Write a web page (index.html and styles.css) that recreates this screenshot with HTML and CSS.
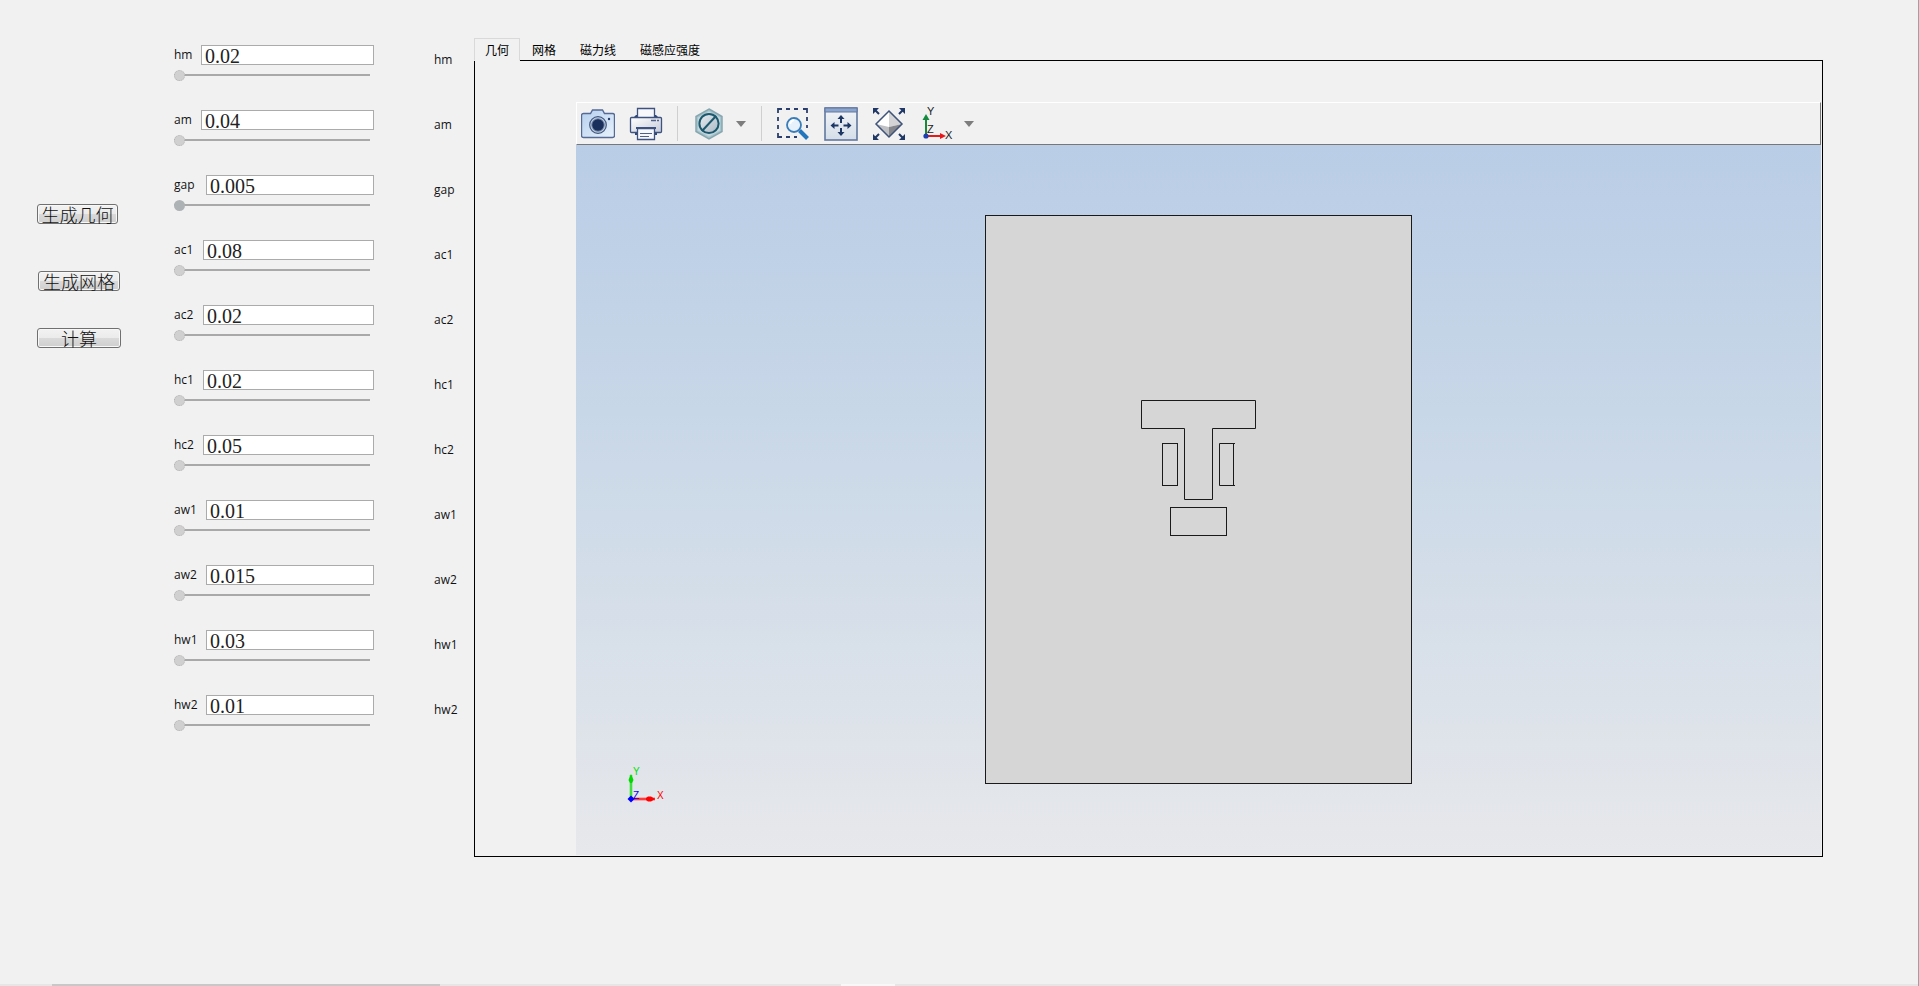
FILE: index.html
```
<!DOCTYPE html>
<html lang="zh-CN">
<head>
<meta charset="utf-8">
<title>几何</title>
<link rel="stylesheet" href="styles.css">
</head>
<body>
<main class="app">
  <div class="actions">
    <button class="btn btn-geometry" type="button">生成几何</button>
    <button class="btn btn-mesh" type="button">生成网格</button>
    <button class="btn btn-solve" type="button">计算</button>
  </div>

  <div class="params">
    <div class="param"><div class="field"><label for="hm">hm</label><input class="value" id="hm" type="text" value="0.02"></div><input class="slider" type="range" value="0" aria-label="hm"></div>
    <div class="param"><div class="field"><label for="am">am</label><input class="value" id="am" type="text" value="0.04"></div><input class="slider" type="range" value="0" aria-label="am"></div>
    <div class="param"><div class="field field-wide"><label for="gap">gap</label><input class="value" id="gap" type="text" value="0.005"></div><input class="slider slider-active" type="range" value="0" aria-label="gap"></div>
    <div class="param"><div class="field field-mid"><label for="ac1">ac1</label><input class="value" id="ac1" type="text" value="0.08"></div><input class="slider" type="range" value="0" aria-label="ac1"></div>
    <div class="param"><div class="field field-mid"><label for="ac2">ac2</label><input class="value" id="ac2" type="text" value="0.02"></div><input class="slider" type="range" value="0" aria-label="ac2"></div>
    <div class="param"><div class="field field-mid"><label for="hc1">hc1</label><input class="value" id="hc1" type="text" value="0.02"></div><input class="slider" type="range" value="0" aria-label="hc1"></div>
    <div class="param"><div class="field field-mid"><label for="hc2">hc2</label><input class="value" id="hc2" type="text" value="0.05"></div><input class="slider" type="range" value="0" aria-label="hc2"></div>
    <div class="param"><div class="field field-wide"><label for="aw1">aw1</label><input class="value" id="aw1" type="text" value="0.01"></div><input class="slider" type="range" value="0" aria-label="aw1"></div>
    <div class="param"><div class="field field-wide"><label for="aw2">aw2</label><input class="value" id="aw2" type="text" value="0.015"></div><input class="slider" type="range" value="0" aria-label="aw2"></div>
    <div class="param"><div class="field field-wide"><label for="hw1">hw1</label><input class="value" id="hw1" type="text" value="0.03"></div><input class="slider" type="range" value="0" aria-label="hw1"></div>
    <div class="param"><div class="field field-wide"><label for="hw2">hw2</label><input class="value" id="hw2" type="text" value="0.01"></div><input class="slider" type="range" value="0" aria-label="hw2"></div>
  </div>

  <div class="names">
    <span>hm</span><span>am</span><span>gap</span><span>ac1</span><span>ac2</span><span>hc1</span><span>hc2</span><span>aw1</span><span>aw2</span><span>hw1</span><span>hw2</span>
  </div>

  <section class="viewer">
    <div class="tabs" role="tablist">
      <button class="tab tab-active" type="button" role="tab" aria-selected="true">几何</button>
      <button class="tab" type="button" role="tab">网格</button>
      <button class="tab" type="button" role="tab">磁力线</button>
      <button class="tab" type="button" role="tab">磁感应强度</button>
    </div>
    <div class="panel">
      <div class="toolbar">
        <button class="tool" type="button" aria-label="Snapshot">
          <svg width="34" height="34" viewBox="0 0 34 34">
            <defs>
              <linearGradient id="cam" x1="0" y1="0" x2="1" y2="1"><stop offset="0" stop-color="#b6d0ee"/><stop offset="1" stop-color="#e8f2fc"/></linearGradient>
            </defs>
            <path d="M2.500 6.500h7l2-3.500h10l2 3.500h8a2 2 0 0 1 2 2v20a2 2 0 0 1-2 2h-29a2 2 0 0 1-2-2v-20a2 2 0 0 1 2-2z" fill="url(#cam)" stroke="#566a96" stroke-width="1.400"/>
            <circle cx="17" cy="18" r="8.300" fill="#c3d3e6" stroke="#42567f" stroke-width="1.200"/>
            <circle cx="17" cy="18" r="6.300" fill="#1b2f5c" stroke="#7f92b0"/>
            <circle cx="28" cy="12" r="1.200" fill="#263c6d"/>
          </svg>
        </button>
        <button class="tool" type="button" aria-label="Print">
          <svg width="34" height="34" viewBox="0 0 34 34">
            <defs>
              <linearGradient id="prn" x1="0" y1="0" x2="1" y2="1"><stop offset="0" stop-color="#fff"/><stop offset="1" stop-color="#c4cad8"/></linearGradient>
            </defs>
            <path d="M5 10l2-2h20l2 2zM6 28v-6h22v6z" fill="#30466f"/>
            <path d="M8.500 1.500h17v10h-17z" fill="#f7f8fc" stroke="#3e5280" stroke-width="1.300"/>
            <rect x="1.500" y="10.500" width="31" height="15" rx="1" fill="url(#prn)" stroke="#3e5280" stroke-width="1.300"/>
            <path d="M22 13.500h5M28 13.500h2" stroke="#4e608b" stroke-width="1.500"/>
            <path d="M7 21h20" stroke="#3e5280" stroke-width="2"/>
            <path d="M8.500 21.500h17v11h-17z" fill="#f7f8fc" stroke="#3e5280" stroke-width="1.300"/>
            <path d="M11 26.500h12M11 29.500h9" stroke="#4e608b" stroke-width="1.200"/>
          </svg>
        </button>
        <span class="divider"></span>
        <button class="tool" type="button" aria-label="Clipping">
          <svg width="34" height="34" viewBox="0 0 34 34">
            <defs>
              <linearGradient id="clip" x1="0" y1="0" x2="1" y2="1"><stop offset="0" stop-color="#e8edf2"/><stop offset="1" stop-color="#aab7c3"/></linearGradient>
            </defs>
            <path d="M17 2l13 7.500v15l-13 7.500-13-7.500v-15z" fill="#a8c4cc" stroke="#87a7b0" stroke-width="1.500"/>
            <path d="M17 4.500l11 6v13l-11 6-11-6v-13z" fill="#c3d7dc"/>
            <circle cx="17" cy="16.500" r="9.600" fill="url(#clip)" stroke="#1c586d" stroke-width="2"/>
            <path d="M24 9L10 24" stroke="#1c586d" stroke-width="2"/>
          </svg>
        </button>
        <button class="arrow" type="button" aria-label="Clipping options"><svg width="12" height="8" viewBox="0 0 12 8"><path d="M1 1h10L6 7z" fill="#7d7d7d"/></svg></button>
        <span class="divider"></span>
        <button class="tool" type="button" aria-label="Zoom box">
          <svg width="34" height="34" viewBox="0 0 34 34">
            <path d="M2 6V2h4M10 2h4M18 2h4M27 2h4v4M31 10v4M31 18v3M2 10v4M2 18v4M2 26v4h4M10 30h4M18 30h3" fill="none" stroke="#2b3f6c" stroke-width="1.800"/>
            <circle cx="18" cy="18" r="7" fill="#e6f1fb" stroke="#3a7cb7" stroke-width="1.800"/>
            <path d="M14 17a5 5 0 0 1 4-4" stroke="#fff" stroke-width="2" fill="none"/>
            <path d="M23.500 23.500L31.500 31.500" stroke="#2277bd" stroke-width="4"/>
          </svg>
        </button>
        <button class="tool" type="button" aria-label="Zoom extents">
          <svg width="34" height="34" viewBox="0 0 34 34">
            <defs><linearGradient id="win" x1="0" y1="0" x2="0" y2="1"><stop offset="0" stop-color="#f2f5f8"/><stop offset="1" stop-color="#d4dde8"/></linearGradient></defs>
            <rect x="1" y="1" width="32" height="32" fill="url(#win)" stroke="#62779f" stroke-width="1.600"/>
            <path d="M1 1h32v4H1z" fill="#8ba6cd" stroke="#62779f"/>
            <path d="M17 16v-6M17 21v6M14.500 18.500h-5M19.500 18.500h5" stroke="#1d3765" stroke-width="2"/>
            <path d="M17 8l3.500 4h-7zM17 29l3.500-4h-7zM6.500 18.500l4-3.500v7zM27.500 18.500l-4-3.500v7z" fill="#1d3765"/>
          </svg>
        </button>
        <button class="tool" type="button" aria-label="Zoom selected">
          <svg width="34" height="34" viewBox="0 0 34 34">
            <path d="M17 4l13 13-13 13L4 17z" fill="#fff"/>
            <path d="M17 4l13 13-13 3z" fill="#d4d4d6"/><path d="M4 17l13 3v10z" fill="#bfc0c3"/><path d="M30 17l-13 3v10z" fill="#85878c"/>
            <path d="M17 4l13 13-13 13L4 17z" fill="none" stroke="#3f5378" stroke-width="1.500"/>
            <path d="M3 3l4 4M31 3l-4 4M3 31l4-4M31 31l-4-4" stroke="#1f3866" stroke-width="2"/>
            <path d="M1 1h6l-6 6zM33 1h-6l6 6zM1 33h6l-6-6zM33 33h-6l6-6z" fill="#1f3866"/>
          </svg>
        </button>
        <button class="tool" type="button" aria-label="View orientation">
          <svg class="axes" width="34" height="34" viewBox="0 0 34 34">
            <path d="M6 29V12" stroke="#16893c" stroke-width="2"/><path d="M6 7l3.500 6h-7z" fill="#16893c"/>
            <path d="M6 29h16" stroke="#e81818" stroke-width="2"/><path d="M26 29l-6-3v6z" fill="#e81818"/>
            <circle cx="6" cy="29" r="2.600" fill="#203fae"/>
            <g font-size="11" fill="#222"><text x="7" y="8">Y</text><text x="7" y="26">Z</text><text x="25" y="32">X</text></g>
          </svg>
        </button>
        <button class="arrow" type="button" aria-label="View options"><svg width="12" height="8" viewBox="0 0 12 8"><path d="M1 1h10L6 7z" fill="#7d7d7d"/></svg></button>
      </div>
      <div class="canvas">
        <svg class="drawing" viewBox="0 0 1245 710" preserveAspectRatio="xMidYMid meet" role="img" aria-label="几何">
          <g fill="#d6d6d6" stroke="#1a1a1a" stroke-width="1">
            <rect x="409.500" y="70.500" width="426" height="568"/>
            <path d="M565.500 255.500h114v28h-43v71h-28v-71h-43z"/>
            <rect x="586.500" y="298.500" width="15" height="42"/>
            <path d="M659 298.500h-15.500v42H659M657.500 298.500v42"/>
            <rect x="594.500" y="362.500" width="56" height="28"/>
          </g>
        </svg>
        <svg class="triad" width="40" height="40" viewBox="0 0 40 40" font-size="10">
          <path d="M6 33V9" stroke="#7ee67e" stroke-width="3"/><path d="M6 33V9" stroke="#00d800"/><path d="M6 8l2.500 6-1.500 3h-2l-1.500-3z" fill="#00d800"/>
          <path d="M6 33h24" stroke="#f77" stroke-width="3"/><path d="M6 33h24" stroke="#f00"/><path d="M30 33l-4 2.500h-3l-2-1.500v-2l2-1.500h3z" fill="#f00"/>
          <path d="M6 29.500l3.500 3.500L6 36.500 2.500 33z" fill="#00f"/>
          <text x="8" y="9" fill="#00e000">Y</text><text x="8" y="33" fill="#00f">Z</text><text x="32" y="33" fill="#f00">X</text>
        </svg>
      </div>
    </div>
  </section>
</main>
<div class="scrollbar"><span class="scroll-thumb"></span><span class="scroll-mark"></span></div>
</body>
</html>
```
FILE: styles.css
```
* { box-sizing: border-box; }
body {
  margin: 0;
  min-height: 100vh;
  display: flex;
  flex-direction: column;
  background: #f1f1f1;
  border-right: 1px solid #a0a0a0;
  font: 12px/20px "Open Sans", "Noto Sans CJK SC", sans-serif;
  color: #111;
}
button { margin: 0; padding: 0; font: inherit; color: inherit; background: none; border: 0; }
.app { flex: 1; display: flex; align-items: stretch; padding: 38px 95px 0 37px; }

.actions { width: 137px; padding-top: 166px; display: flex; flex-direction: column; align-items: flex-start; }
.btn {
  height: 20px;
  border: 1px solid #707070;
  border-radius: 3px;
  background: linear-gradient(#f2f2f2 0%, #ebebeb 50%, #dadada 51%, #cfcfcf 100%);
  box-shadow: inset 0 0 0 1px #f8f8f8;
  font: 300 18px/16px "Noto Sans CJK SC", sans-serif;
  white-space: nowrap;
}
.btn-geometry { width: 81px; }
.btn-mesh { width: 82px; margin: 47px 0 37px 1px; }
.btn-solve { width: 84px; }

.params { width: 260px; padding-top: 7px; }
.param { height: 65px; }
.field { display: grid; grid-template-columns: 27px 173px; }
.field-mid { grid-template-columns: 29px 171px; }
.field-wide { grid-template-columns: 32px 168px; }
.value {
  width: 100%;
  height: 20px;
  margin: 0;
  padding: 2px 3px 0;
  border: 1px solid #ababab;
  border-radius: 0;
  background: #fff;
  color: #222;
  font: 20px/18px "Liberation Serif", serif;
}
.slider { appearance: none; display: block; width: 196px; height: 12px; margin: 4px 0 0; background: transparent; }
.slider::-webkit-slider-runnable-track { height: 2px; background: #a9a9a9; }
.slider::-webkit-slider-thumb { appearance: none; width: 11px; height: 11px; margin-top: -4px; border: 1px dotted #b4b4b4; border-radius: 50%; background: #d0d0d0; }
.slider-active::-webkit-slider-thumb { border: 0; background: #adb2b5; }

.names { width: 40px; padding-top: 12px; display: flex; flex-direction: column; }
.names span { height: 65px; }

.viewer { flex: 1; min-width: 0; display: flex; flex-direction: column; margin-bottom: 127px; }
.tabs { display: flex; height: 23px; }
.tab { height: 22px; padding: 0 12px; color: #000; font: 12px/24px "Noto Sans CJK SC", sans-serif; }
.tab-active { position: relative; height: 23px; padding: 0 10px; border: 1px solid #d9d9d9; border-bottom-color: #f1f1f1; background: #f1f1f1; line-height: 22px; }
.panel { flex: 1; display: flex; flex-direction: column; margin-top: -1px; padding: 41px 1px 1px 101px; border: 1px solid #000; }

.toolbar {
  display: flex;
  align-items: center;
  height: 43px;
  padding-left: 4px;
  border: 1px solid;
  border-color: #fff #777 #777 #fff;
}
.tool { width: 34px; height: 34px; margin-right: 14px; }
.tool svg, .arrow svg { display: block; }
.divider { width: 1px; height: 35px; margin-right: 14px; background: #cfcfcf; }
.arrow { width: 12px; height: 8px; margin: 0 14px 0 -5px; }
.axes { overflow: visible; font-family: "Liberation Sans", sans-serif; }

.canvas { position: relative; flex: 1; min-height: 300px; display: flex; background: linear-gradient(#b9cde6, #cbd9e8 45%, #e7e8eb); }
.drawing { flex: 1; min-width: 0; width: 100%; height: auto; }
.triad { position: absolute; left: 49px; bottom: 49px; overflow: visible; font-family: "Liberation Sans", sans-serif; }

.scrollbar { display: flex; height: 2px; background: #e6e6e6; }
.scroll-thumb { width: 388px; margin-left: 52px; background: #c8c8c8; }
.scroll-mark { width: 54px; margin-left: 401px; background: #f8f8f8; }
```
